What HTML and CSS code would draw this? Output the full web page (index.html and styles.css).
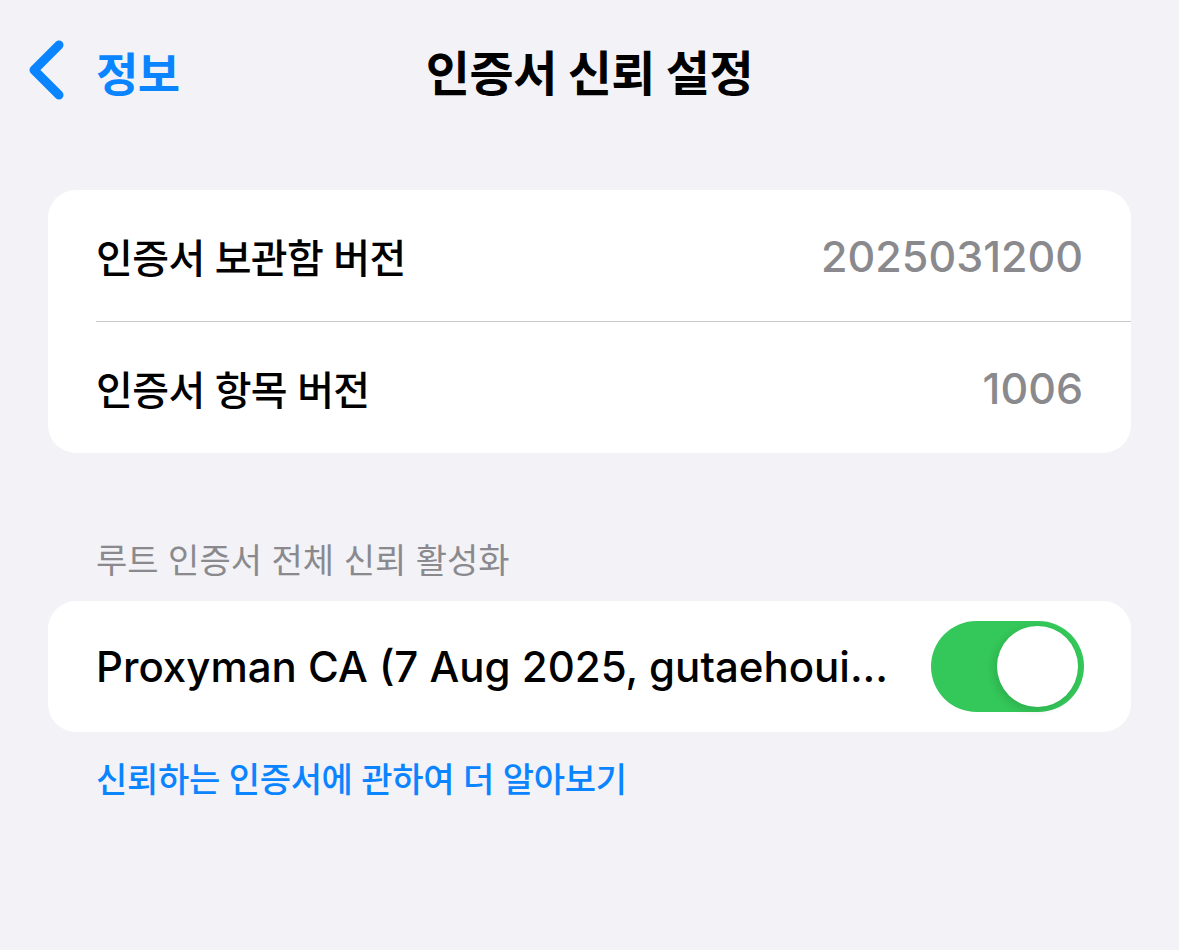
FILE: index.html
```html
<!DOCTYPE html>
<html lang="ko">
<head>
<meta charset="utf-8">
<link rel="stylesheet" href="styles.css">
</head>
<body>
<div class="screen">
  <header class="nav">
    <a class="back">
      <svg class="chev" width="40" height="64" viewBox="0 0 40 64"><polyline points="31,6 6,31 31,56" fill="none" stroke="#0a84ff" stroke-width="9" stroke-linecap="round" stroke-linejoin="round"/></svg>
      <span class="back-label">정보</span>
    </a>
    <h1 class="title">인증서 신뢰 설정</h1>
    <div class="spacer"></div>
  </header>

  <section class="card first">
    <div class="row">
      <span class="label">인증서 보관함 버전</span>
      <span class="value">2025031200</span>
    </div>
    <div class="sep"></div>
    <div class="row">
      <span class="label">인증서 항목 버전</span>
      <span class="value">1006</span>
    </div>
  </section>

  <div class="section-header">루트 인증서 전체 신뢰 활성화</div>

  <section class="card">
    <div class="row">
      <span class="label latin">Proxyman CA (7 Aug 2025, gutaehoui...</span>
      <div class="toggle"><div class="knob"></div></div>
    </div>
  </section>

  <a class="footer-link">신뢰하는 인증서에 관하여 더 알아보기</a>
</div>
</body>
</html>
```

FILE: styles.css
```css
html, body {
  margin: 0;
  padding: 0;
}
body {
  background: #f2f2f7;
  font-family: Inter, "Noto Sans CJK KR", sans-serif;
  color: #000;
  width: 1179px;
  height: 950px;
  overflow: hidden;
}
.screen {
  display: flex;
  flex-direction: column;
}
.nav {
  height: 140px;
  display: grid;
  grid-template-columns: 1fr auto 1fr;
  align-items: center;
}
.back {
  display: flex;
  align-items: center;
  padding-left: 28px;
  margin-top: 2px;
  color: #0a84ff;
}
.chev {
  display: block;
}
.back-label {
  margin-left: 28px;
  font-size: 46px;
  font-weight: 600;
  letter-spacing: -0.5px;
}
.title {
  margin: 0;
  font-size: 48px;
  font-weight: 700;
  letter-spacing: -0.5px;
}
.card {
  margin: 0 48px;
  background: #fff;
  border-radius: 28px;
  display: flex;
  flex-direction: column;
}
.card.first {
  margin-top: 50px;
}
.row {
  height: 131px;
  display: flex;
  align-items: center;
  justify-content: space-between;
  padding: 0 48px;
}
.label {
  font-size: 40px;
  font-weight: 500;
  letter-spacing: -0.6px;
}
.label.latin {
  font-size: 42px;
  font-weight: 500;
  letter-spacing: 0;
}
.value {
  font-size: 43px;
  font-weight: 500;
  color: #8a8a8e;
}
.sep {
  height: 1px;
  background: #c8c8cc;
  margin-left: 48px;
}
.section-header {
  height: 148px;
  padding-left: 96px;
  box-sizing: border-box;
  padding-top: 86px;
  font-size: 34px;
  color: #8a8a8e;
  letter-spacing: 0;
  line-height: 44px;
}
.toggle {
  width: 153px;
  height: 91px;
  border-radius: 46px;
  background: #34c759;
  position: relative;
  margin-right: -1px;
}
.knob {
  position: absolute;
  top: 5px;
  right: 6px;
  width: 81px;
  height: 81px;
  border-radius: 50%;
  background: #fff;
  box-shadow: -3px 3px 8px rgba(0,0,0,0.12);
}
.footer-link {
  padding-left: 96px;
  margin-top: 26px;
  font-size: 34px;
  font-weight: 500;
  color: #0a84ff;
  letter-spacing: -0.3px;
  line-height: 44px;
}
```
